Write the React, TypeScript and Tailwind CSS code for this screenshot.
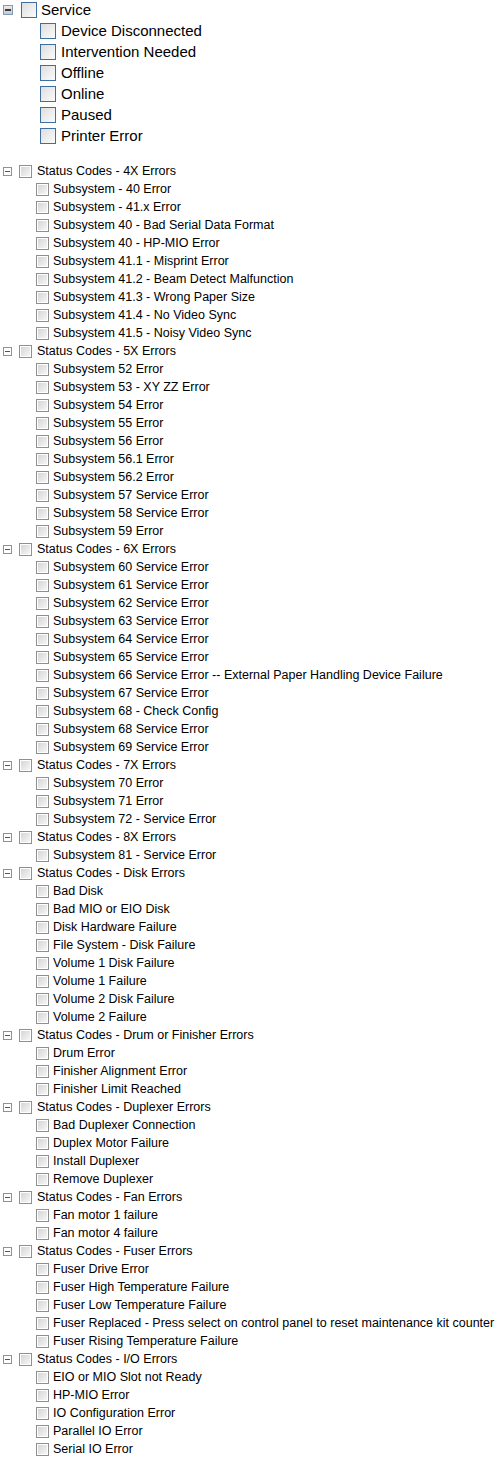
import React from "react";

interface Group {
  title: string;
  items: string[];
}

const serviceItems = [
  "Device Disconnected",
  "Intervention Needed",
  "Offline",
  "Online",
  "Paused",
  "Printer Error",
];

const groups: Group[] = [
  {
    title: "Status Codes - 4X Errors",
    items: [
      "Subsystem - 40 Error",
      "Subsystem - 41.x Error",
      "Subsystem 40 - Bad Serial Data Format",
      "Subsystem 40 - HP-MIO Error",
      "Subsystem 41.1 - Misprint Error",
      "Subsystem 41.2 - Beam Detect Malfunction",
      "Subsystem 41.3 - Wrong Paper Size",
      "Subsystem 41.4 - No Video Sync",
      "Subsystem 41.5 - Noisy Video Sync",
    ],
  },
  {
    title: "Status Codes - 5X Errors",
    items: [
      "Subsystem 52 Error",
      "Subsystem 53 - XY ZZ Error",
      "Subsystem 54 Error",
      "Subsystem 55 Error",
      "Subsystem 56 Error",
      "Subsystem 56.1 Error",
      "Subsystem 56.2 Error",
      "Subsystem 57 Service Error",
      "Subsystem 58 Service Error",
      "Subsystem 59 Error",
    ],
  },
  {
    title: "Status Codes - 6X Errors",
    items: [
      "Subsystem 60 Service Error",
      "Subsystem 61 Service Error",
      "Subsystem 62 Service Error",
      "Subsystem 63 Service Error",
      "Subsystem 64 Service Error",
      "Subsystem 65 Service Error",
      "Subsystem 66 Service Error -- External Paper Handling Device Failure",
      "Subsystem 67 Service Error",
      "Subsystem 68 - Check Config",
      "Subsystem 68 Service Error",
      "Subsystem 69 Service Error",
    ],
  },
  {
    title: "Status Codes - 7X Errors",
    items: ["Subsystem 70 Error", "Subsystem 71 Error", "Subsystem 72 - Service Error"],
  },
  {
    title: "Status Codes - 8X Errors",
    items: ["Subsystem 81 - Service Error"],
  },
  {
    title: "Status Codes - Disk Errors",
    items: [
      "Bad Disk",
      "Bad MIO or EIO Disk",
      "Disk Hardware Failure",
      "File System - Disk Failure",
      "Volume 1 Disk Failure",
      "Volume 1 Failure",
      "Volume 2 Disk Failure",
      "Volume 2 Failure",
    ],
  },
  {
    title: "Status Codes - Drum or Finisher Errors",
    items: ["Drum Error", "Finisher Alignment Error", "Finisher Limit Reached"],
  },
  {
    title: "Status Codes - Duplexer Errors",
    items: [
      "Bad Duplexer Connection",
      "Duplex Motor Failure",
      "Install Duplexer",
      "Remove Duplexer",
    ],
  },
  {
    title: "Status Codes - Fan Errors",
    items: ["Fan motor 1 failure", "Fan motor 4 failure"],
  },
  {
    title: "Status Codes - Fuser Errors",
    items: [
      "Fuser Drive Error",
      "Fuser High Temperature Failure",
      "Fuser Low Temperature Failure",
      "Fuser Replaced - Press select on control panel to reset maintenance kit counter",
      "Fuser Rising Temperature Failure",
    ],
  },
  {
    title: "Status Codes - I/O Errors",
    items: [
      "EIO or MIO Slot not Ready",
      "HP-MIO Error",
      "IO Configuration Error",
      "Parallel IO Error",
      "Serial IO Error",
    ],
  },
];

// big themed checkbox used by the top "Service" tree
function BigBox() {
  return (
    <span className="block w-4 h-4 shrink-0 border border-[#3f6f9f] bg-linear-to-br from-[#dedede] to-[#fbfbfb]" />
  );
}

// classic grey checkbox for the status code tree
function SmallBox() {
  return (
    <span className="block w-[13px] h-[13px] shrink-0 border border-[#8e8f8f] p-px bg-white">
      <span className="block w-full h-full bg-linear-to-br from-[#d6d6d6] to-[#f6f6f6]" />
    </span>
  );
}

export default function App() {
  return (
    <div
      className="w-[501px] h-[1460px] bg-white text-black overflow-hidden"
      style={{ fontFamily: '"Liberation Sans", Arial, sans-serif' }}
    >
      {/* Service tree */}
      <div className="-mt-px flex flex-col text-[15px]">
        <div className="flex items-center h-[21px] pl-[3px]">
          <span className="w-[10px] h-[10px] shrink-0 border border-[#7f9bb8] bg-linear-to-b from-[#ececec] to-[#c9c9c9] flex items-center justify-center">
            <span className="block w-[6px] h-[2px] bg-[#3a3a3a]" />
          </span>
          <span className="ml-[8px] flex">
            <BigBox />
          </span>
          <span className="ml-[4px] leading-none">Service</span>
        </div>
        {serviceItems.map((item) => (
          <div key={item} className="flex items-center h-[21px] pl-[40px] gap-[5px]">
            <BigBox />
            <span className="leading-none">{item}</span>
          </div>
        ))}
      </div>

      {/* Status code tree */}
      <div className="mt-[16px] flex flex-col text-[12.5px]">
        {groups.map((group) => (
          <div key={group.title} className="flex flex-col">
            <div className="flex items-center h-[18px] pl-[3px]">
              <span className="w-[9px] h-[9px] shrink-0 border border-[#919191] bg-white flex items-center justify-center">
                <span className="block w-[5px] h-px bg-[#2c5d98]" />
              </span>
              <span className="ml-[7px] flex">
                <SmallBox />
              </span>
              <span className="ml-[5px] leading-none whitespace-nowrap">{group.title}</span>
            </div>
            {group.items.map((item) => (
              <div key={item} className="flex items-center h-[18px] pl-[36px] gap-[4px]">
                <SmallBox />
                <span className="leading-none whitespace-nowrap">{item}</span>
              </div>
            ))}
          </div>
        ))}
      </div>
    </div>
  );
}
